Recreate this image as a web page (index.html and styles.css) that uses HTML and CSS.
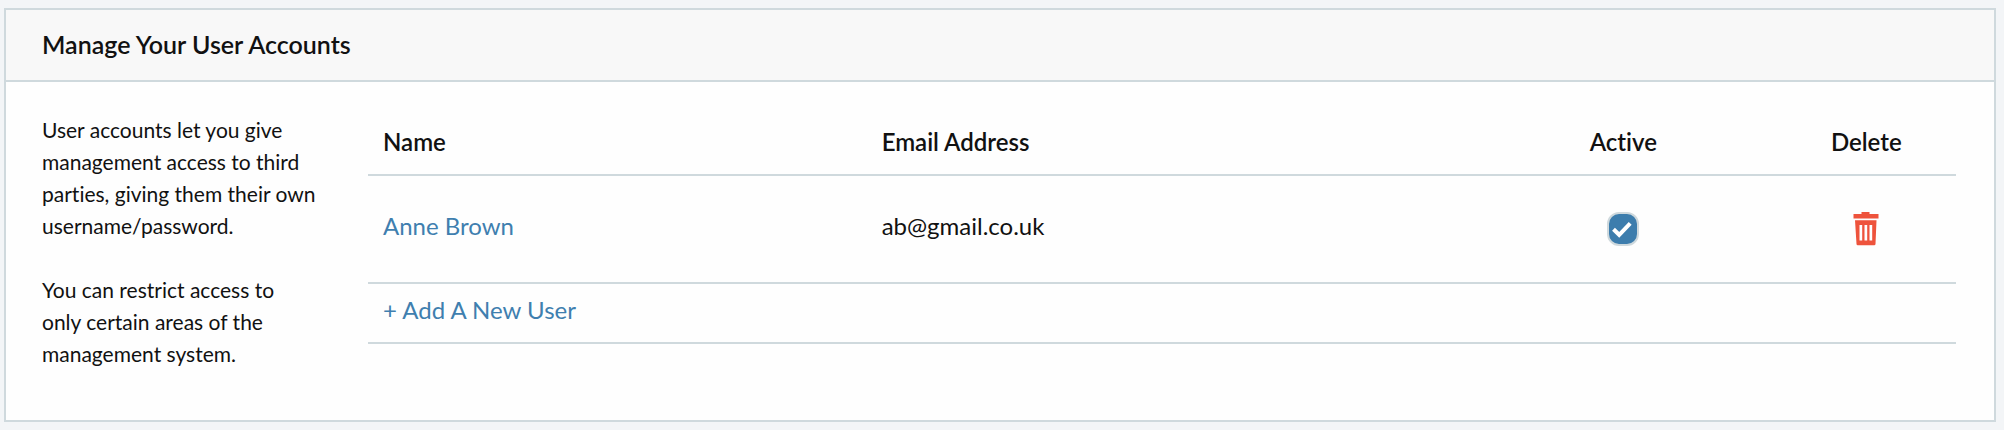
FILE: index.html
```html
<!DOCTYPE html>
<html lang="en">
<head>
<meta charset="utf-8">
<title>Manage Your User Accounts</title>
<link rel="stylesheet" href="styles.css">
</head>
<body>
<section class="panel">
  <header class="panel-header">
    <h1 class="panel-title">Manage Your User Accounts</h1>
  </header>
  <div class="panel-body">
    <div class="intro">
      <p>User accounts let you give management access to third parties, giving them their own username/password.</p>
      <p>You can restrict access to only certain areas of the management system.</p>
    </div>
    <table class="users">
      <thead>
        <tr>
          <th class="col-name" scope="col">Name</th>
          <th class="col-email" scope="col">Email Address</th>
          <th class="col-active" scope="col">Active</th>
          <th class="col-delete" scope="col">Delete</th>
        </tr>
      </thead>
      <tbody>
        <tr class="user">
          <td><a href="#">Anne Brown</a></td>
          <td>ab@gmail.co.uk</td>
          <td class="control">
            <label class="check">
              <input class="check-box" type="checkbox" aria-label="Anne Brown is active" checked>
              <svg class="check-mark" viewBox="0 0 32 34" aria-hidden="true"><path d="M6.5 17.2 12.2 22.8 23.2 11.4" fill="none" stroke="#fff" stroke-width="4"/></svg>
            </label>
          </td>
          <td class="control">
            <button class="delete" type="button" aria-label="Delete Anne Brown">
              <svg class="delete-icon" viewBox="0 0 26 34" aria-hidden="true">
                <path fill="#ee533c" fill-rule="evenodd" d="M8.5 0h8v2H25.500v4.500H.5V2h8zM2 8.300h21.500L22.500 32q-.1 1.300-1.300 1.300H4.800q-1.200 0-1.300-1.300zM6.500 13v15.500h2.700V13zM11.500 13v15.500h2.700V13zM16.500 13v15.500h2.700V13z"/>
              </svg>
            </button>
          </td>
        </tr>
        <tr class="add">
          <td colspan="4"><a href="#">+ Add A New User</a></td>
        </tr>
      </tbody>
    </table>
  </div>
</section>
</body>
</html>
```
FILE: styles.css
```css
* {
  box-sizing: border-box;
}

body {
  margin: 0;
  padding: 8px 8px 8px 4px;
  background: #f3f5f7;
  color: #111;
  font: 21px/32px Lato, "Open Sans", sans-serif;
  font-variant-ligatures: none;
}

a {
  color: #3f7faf;
  text-decoration: none;
}

.panel {
  border: 2px solid #cfd9dd;
  background: #fefefe;
}

.panel-header {
  padding: 18px 36px 20px;
  border-bottom: 2px solid #cfd9dd;
  background: #f8f8f8;
}

.panel-title {
  margin: 0;
  font-size: 25px;
  font-weight: 600;
  line-height: 32px;
}

.panel-body {
  display: grid;
  grid-template-columns: 276px 1fr;
  column-gap: 50px;
  align-items: start;
  padding: 32px 38px 50px 36px;
}

.intro p {
  margin: 0 0 32px;
}

.intro p:last-child {
  margin-bottom: 0;
}

.users {
  width: 100%;
  border-collapse: separate;
  border-spacing: 0;
  table-layout: fixed;
  font-size: 24px;
}

.users th,
.users td {
  padding: 12px 15px 16px;
  border-bottom: 2px solid #cfd9dd;
  text-align: left;
}

.users th {
  font-weight: 600;
}

.users .user td {
  height: 108px;
  padding-bottom: 18px;
}

.users .add td {
  padding: 10px 15px 16px;
}

.col-name {
  width: 31.4%;
}

.col-email {
  width: 38%;
}

.users .col-active {
  width: 19.3%;
  text-align: center;
}

.users .col-delete {
  width: 11.3%;
  text-align: center;
}

.users .user .control {
  padding: 12px 0 14px;
  text-align: center;
}

.check {
  display: inline-grid;
  vertical-align: middle;
}

.check-box,
.check-mark {
  grid-area: 1 / 1;
  width: 32px;
  height: 34px;
  margin: 0;
}

.check-box {
  appearance: none;
  border: 2px solid #cfd9dd;
  border-radius: 12px;
  background: #fff;
}

.check-box:checked {
  background: #3d7dad;
}

.check-mark {
  pointer-events: none;
}

.delete {
  display: inline-grid;
  padding: 0;
  border: 0;
  background: none;
  vertical-align: middle;
  cursor: pointer;
}

.delete-icon {
  width: 26px;
  height: 34px;
}
```
